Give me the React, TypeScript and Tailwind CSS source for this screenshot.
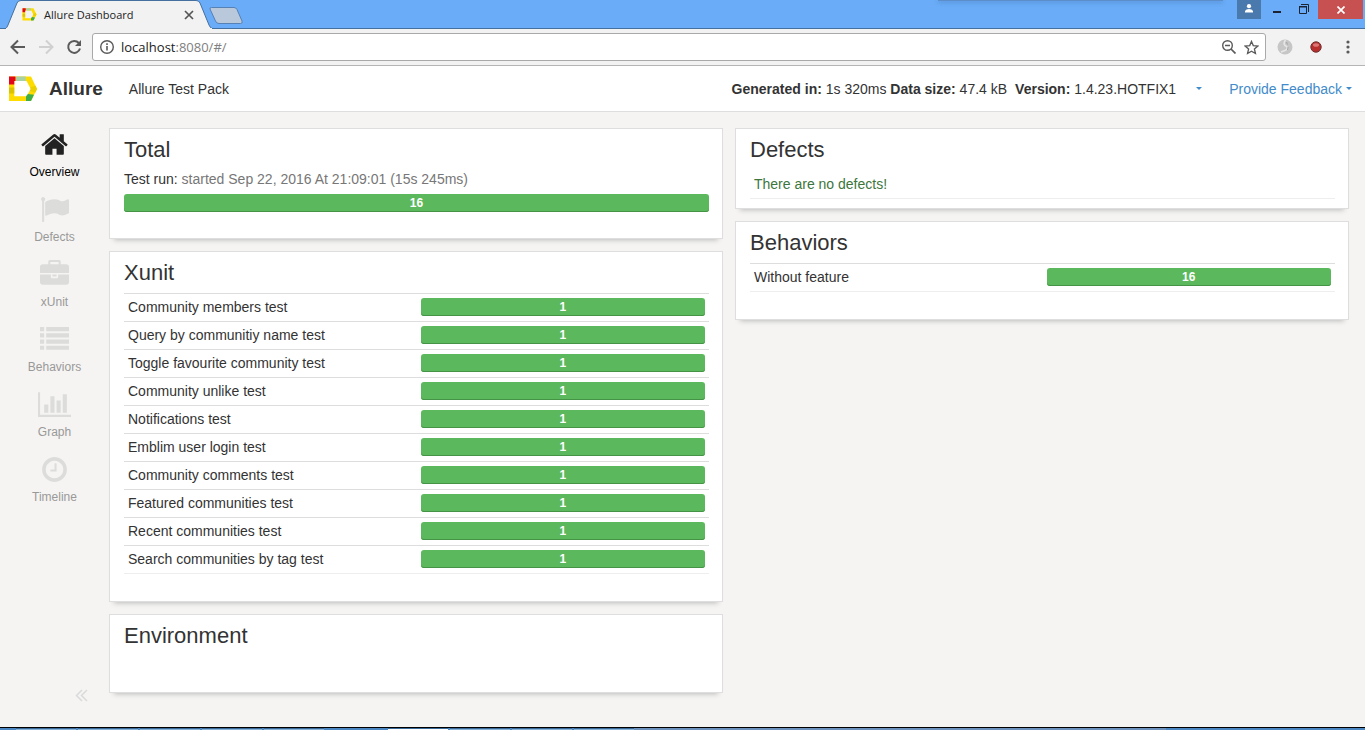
import React from "react";

const suites = [
  "Community members test",
  "Query by communitiy name test",
  "Toggle favourite community test",
  "Community unlike test",
  "Notifications test",
  "Emblim user login test",
  "Community comments test",
  "Featured communities test",
  "Recent communities test",
  "Search communities by tag test",
];

const icons = {
  home: "M1472 992v480q0 26-19 45t-45 19h-384v-384h-256v384h-384q-26 0-45-19t-19-45v-480q0-1 .5-3t.5-3l575-474 575 474q1 2 1 6zm223-69l-62 74q-8 9-21 11h-3q-13 0-21-7l-692-577-692 577q-12 8-24 7-13-2-21-11l-62-74q-8-10-7-23.5t11-21.5l719-599q32-26 76-26t76 26l244 204v-195q0-14 9-23t23-9h192q14 0 23 9t9 23v408l219 182q10 8 11 21.5t-7 23.5z",
  flag: "M320 256q0 72-64 110v1266q0 13-9.5 22.5t-22.5 9.5h-64q-13 0-22.5-9.5t-9.5-22.5v-1266q-64-38-64-110 0-53 37.5-90.5t90.5-37.5 90.5 37.5 37.5 90.5zm1472 64v763q0 25-12.5 38.5t-39.5 27.5q-215 116-369 116-61 0-123.5-22t-108.5-48-115.5-48-142.5-22q-192 0-464 146-17 9-33 9-26 0-45-19t-19-45v-742q0-32 31-55 21-14 79-43 236-120 421-120 107 0 200 29t219 88q38 19 88 19 54 0 117.5-21t110-47 88-47 54.5-21q26 0 45 19t19 45z",
  briefcase: "M640 256h512v-128h-512v128zm1152 640v480q0 66-47 113t-113 47h-1472q-66 0-113-47t-47-113v-480h672v160q0 26 19 45t45 19h320q26 0 45-19t19-45v-160h672zm-768 0v128h-256v-128h256zm768-480v384h-1792v-384q0-66 47-113t113-47h352v-160q0-40 28-68t68-28h576q40 0 68 28t28 68v160h352q66 0 113 47t47 113z",
  list: "M0 128h256v256h-256zM384 128h1408v256h-1408zM0 512h256v256h-256zM384 512h1408v256h-1408zM0 896h256v256h-256zM384 896h1408v256h-1408zM0 1280h256v256h-256zM384 1280h1408v256h-1408z",
  chart: "M640 896v512h-256v-512h256zm384-512v1024h-256v-1024h256zm1024 1152v128h-2048v-1536h128v1408h1920zm-640-896v768h-256v-768h256zm384-384v1152h-256v-1152h256z",
  clock: "M896 544v448q0 14-9 23t-23 9h-320q-14 0-23-9t-9-23v-64q0-14 9-23t23-9h224v-352q0-14 9-23t23-9h64q14 0 23 9t9 23zm416 352q0-148-73-273t-198-198-273-73-273 73-198 198-73 273 73 273 198 198 273 73 273-73 198-198 73-273zm224 0q0 209-103 385.5t-279.5 279.5-385.5 103-385.5-103-279.5-279.5-103-385.5 103-385.5 279.5-279.5 385.5-103 385.5 103 279.5 279.5 103 385.5z",
};

const nav = [
  { label: "Overview", d: icons.home, box: "0 0 1792 1792", active: true },
  { label: "Defects", d: icons.flag, box: "0 0 1792 1792" },
  { label: "xUnit", d: icons.briefcase, box: "0 0 1792 1792" },
  { label: "Behaviors", d: icons.list, box: "0 0 1792 1792" },
  { label: "Graph", d: icons.chart, box: "0 0 2048 1792" },
  { label: "Timeline", d: icons.clock, box: "0 0 1536 1792" },
];

function Logo({ className }: { className: string }) {
  return (
    <svg viewBox="0 0 28 26" className={className} aria-hidden="true">
      <path d="M0 .5H22L28 13 22 25H0zM5.300 5V20.300H17.500L21.800 13 17.500 5z" fill="#ffdc00" fillRule="evenodd" />
      <path d="M0 11.500h5.300v6H0z" fill="#dcc300" />
      <path d="M21 11.500L26.500 9.800 28 13l-1.700 3.500L20.500 15l1.300-2z" fill="#ead000" />
      <path d="M0 .5h6.500V5H5.300v3.500H0z" fill="#e2061a" />
      <path d="M7 .5h9.700V5H7z" fill="#a9d2a4" />
      <path d="M19 18l6 .8L22 25h-5v-4.700z" fill="#3fae49" />
    </svg>
  );
}

function BrowserChrome() {
  return (
    <header className="font-['Open_Sans',sans-serif]">
      <div className="relative flex h-[29px] border-b border-[#44709f] bg-[#6aacf7]">
        <div className="absolute top-0 right-[142px] h-px w-[285px] bg-[#5c8fca] shadow-[0_1px_4px_#3b6ba8]" />
        <div className="relative flex h-[29px] w-[213px] items-center pl-[22px]">
          <svg viewBox="0 0 213 29" className="absolute inset-0 h-full w-full" aria-hidden="true">
            <path d="M5 29Q7 28 8 25L17 3Q18 .5 21 .5H196Q199 .5 200 3L209 25Q210 28 213 29Z" fill="#f2f2f2" stroke="#44709f" />
            <path d="M6 28.500H212" stroke="#f2f2f2" />
          </svg>
          <Logo className="relative h-[13px] w-[15px]" />
          <span className="relative ml-[7px] text-[11px] leading-4 text-[#222]">Allure Dashboard</span>
          <button aria-label="Close tab" className="absolute top-[10px] left-[184px] text-[#555]">
            <svg viewBox="0 0 10 10" className="size-[10px]"><path d="M1 1l8 8M9 1L1 9" stroke="currentColor" strokeWidth="1.700" /></svg>
          </button>
        </div>
        <button aria-label="New tab" className="-ml-1 h-[26px]">
          <svg viewBox="0 0 34 26" className="h-[26px] w-[34px]"><path d="M2.500 7.500H25Q27 7.500 28 9.500L33 21Q34 23.500 31.500 23.500H10Q7.500 23.500 6.500 21L1 9Q.5 7.500 2.500 7.500Z" fill="#b9c8da" stroke="#5581b5" /></svg>
        </button>
        <div className="mr-[2px] ml-auto flex h-[19px]">
          <button aria-label="Profile" className="flex w-6 justify-center bg-[#4a79ae] pt-1 text-white">
            <svg viewBox="0 0 8 9" className="h-[9px] w-2"><circle cx="4" cy="2.200" r="2.100" fill="currentColor" /><path d="M0 8.500V7q1-2 4-2t4 2v1.500z" fill="currentColor" /></svg>
          </button>
          <button aria-label="Minimize" className="flex w-8 items-end justify-center pb-[6px]"><span className="h-[2px] w-2 bg-[#1b2430]" /></button>
          <button aria-label="Restore" className="flex w-[25px] justify-center pt-1 pr-1">
            <svg viewBox="0 0 10 10" className="size-[10px]"><path d="M.5 3h7v6.500h-7zM0 2.500h8M2 .5h7.500V8" fill="none" stroke="#1b2430" /></svg>
          </button>
          <button aria-label="Close" className="flex w-[45px] items-center justify-center bg-[#c75050]">
            <svg viewBox="0 0 8 8" className="size-2"><path d="M.5.5l7 7M7.500.5l-7 7" stroke="#fff" strokeWidth="1.700" /></svg>
          </button>
        </div>
      </div>
      <div className="flex h-[37px] items-center border-b border-[#b6b4b6] bg-[#f2f2f2] pr-[13px] pl-[10px] text-[#5a5a5a]">
        <button aria-label="Back"><svg viewBox="0 0 16 16" className="size-4"><path d="M15 8H2M8 1.500L1.500 8 8 14.500" fill="none" stroke="currentColor" strokeWidth="2" /></svg></button>
        <button aria-label="Forward" className="ml-3 text-[#d0d0d0]"><svg viewBox="0 0 16 16" className="size-4"><path d="M1 8h13M8 1.500L14.500 8 8 14.500" fill="none" stroke="currentColor" strokeWidth="2" /></svg></button>
        <button aria-label="Reload" className="ml-3"><svg viewBox="0 0 16 16" className="size-4"><path d="M12.800 4A6 6 0 1 0 14 9.500" fill="none" stroke="currentColor" strokeWidth="2" /><path d="M15 1v6H9z" fill="currentColor" /></svg></button>
        <div className="ml-[10px] flex h-7 grow items-center rounded-[3px] border border-[#a9a9a9] bg-white px-[6px]">
          <svg viewBox="0 0 16 16" className="size-4"><circle cx="8" cy="8" r="6.300" fill="none" stroke="currentColor" strokeWidth="1.400" /><path d="M8 7v4.500M8 4.200v1.700" stroke="currentColor" strokeWidth="1.600" /></svg>
          <div className="relative ml-[6px] grow text-[13px] leading-5">
            <input aria-label="Address" defaultValue="localhost:8080/#/" className="absolute inset-0 w-full bg-transparent text-transparent outline-none" />
            <span className="pointer-events-none" aria-hidden="true"><span className="text-[#222]">localhost</span><span className="text-[#808080]">:8080/#/</span></span>
          </div>
          <svg viewBox="0 0 14 14" className="size-[14px]"><circle cx="5.500" cy="5.500" r="4.800" fill="none" stroke="currentColor" strokeWidth="1.400" /><path d="M3 5.500h5M9 9l4.500 4.500" stroke="currentColor" strokeWidth="1.700" /></svg>
          <button aria-label="Bookmark" className="ml-2"><svg viewBox="0 0 16 16" className="size-[15px]"><path d="M8 1.500l1.900 4.500 4.900.4-3.700 3.200 1.100 4.800L8 11.900l-4.200 2.500 1.100-4.800L1.200 6.400 6.100 6z" fill="none" stroke="currentColor" strokeWidth="1.400" /></svg></button>
        </div>
        <svg viewBox="0 0 16 16" className="ml-[11px] size-4"><circle cx="8" cy="8" r="7.500" fill="#c6c6c6" /><path d="M8.500 1Q6 4 8 6.500q4 2 1 4.500l-5 2" fill="none" stroke="#e6e6e6" strokeWidth="1.600" /><path d="M9.500 3l1 2.500M11 8l-.5 3" stroke="#999" strokeWidth=".8" /></svg>
        <svg viewBox="0 0 12 12" className="ml-[17px] size-3"><circle cx="6" cy="6" r="5.200" fill="#b82e2e" stroke="#6e3030" /><ellipse cx="6" cy="4" rx="3" ry="1.800" fill="#dc7777" /></svg>
        <button aria-label="Menu" className="ml-[22px]"><svg viewBox="0 0 8 14" className="h-[14px] w-2"><circle cx="4" cy="2" r="1.600" fill="currentColor" /><circle cx="4" cy="7" r="1.600" fill="currentColor" /><circle cx="4" cy="12" r="1.600" fill="currentColor" /></svg></button>
      </div>
    </header>
  );
}

function Caret() {
  return <svg viewBox="0 0 6 3" className="h-[3px] w-[6px]" aria-hidden="true"><path d="M0 0h6L3 3z" fill="#428bca" /></svg>;
}

function Bar({ value }: { value: number }) {
  return (
    <div className="h-[18px] rounded-[3px] bg-[#5cb85c] text-center text-xs leading-[18px] font-bold text-white shadow-[inset_0_-1px_0_#459345]">{value}</div>
  );
}

function Card({ title, className = "", children }: { title: string; className?: string; children?: React.ReactNode }) {
  return (
    <section className={"border border-[#dedede] bg-white pt-[9px] pr-[13px] pl-[14px] shadow-[0_6px_5px_-5px_#bbb] " + className}>
      <h2 className="text-[22px] leading-6">{title}</h2>
      {children}
    </section>
  );
}

function ResultTable({ rows }: { rows: { name: string; value: number }[] }) {
  return (
    <table className="mt-2 w-full table-fixed border-collapse border-b border-[#eee]">
      <tbody>
        {rows.map((row) => (
          <tr key={row.name} className="h-7 border-t border-[#ddd] align-top">
            <td className="px-1 pt-1 leading-[18px]">{row.name}</td>
            <td className="px-1 pt-1"><Bar value={row.value} /></td>
          </tr>
        ))}
      </tbody>
    </table>
  );
}

function Taskbar() {
  return (
    <div className="flex h-[3px] border-t border-black bg-[#4a87c3]">
      <div className="ml-4 flex w-[310px] gap-[2px]">
        {[0, 1, 2, 3, 4].map((n) => <span key={n} className="h-[2px] w-[60px] border-t border-[#3a6a9a] bg-[#86b2da]" />)}
      </div>
      <div className="ml-[62px] flex gap-[2px]">
        <span className="h-[2px] w-[60px] border-t border-[#3a6a9a] bg-white" />
        {[0, 1, 2].map((n) => <span key={n} className="h-[2px] w-[60px] border-t border-[#3a6a9a] bg-[#86b2da]" />)}
      </div>
      <span className="w-[532px] bg-[#6c92bd]" />
    </div>
  );
}

export default function App() {
  return (
    <div className="flex min-h-screen flex-col bg-[#f5f4f2] font-['Liberation_Sans',Arial,sans-serif] text-sm text-[#333]">
      <BrowserChrome />
      <div className="flex h-[46px] items-center border-b border-[#dedede] bg-white pr-[13px] pl-[9px]">
        <Logo className="h-[26px] w-7" />
        <a href="#/" className="ml-3 text-[19px] leading-6 font-bold">Allure</a>
        <span className="ml-[26px]">Allure Test Pack</span>
        <div className="ml-auto flex items-center whitespace-pre">
          <span><b>Generated in:</b> 1s 320ms </span>
          <span><b>Data size:</b> 47.4 kB</span>
          <span className="ml-2"><b>Version:</b> 1.4.23.HOTFIX1</span>
          <button aria-label="Choose version" className="ml-5"><Caret /></button>
          <a href="#/feedback" className="ml-[27px] flex items-center gap-1 text-[#428bca]">Provide Feedback<Caret /></a>
        </div>
      </div>
      <div className="flex grow">
        <nav className="flex w-[109px] shrink-0 flex-col pt-[18px]">
          {nav.map((item) => (
            <a key={item.label} href={"#/" + item.label.toLowerCase()} className={"flex h-[65px] flex-col items-center text-xs " + (item.active ? "text-black" : "text-[#999]")}>
              <svg viewBox={item.box} className={"h-[29px] w-[33px] " + (item.active ? "text-[#222]" : "text-[#dcdcdb]")} aria-hidden="true"><path d={item.d} fill="currentColor" /></svg>
              <span className="mt-[5px]">{item.label}</span>
            </a>
          ))}
          <button aria-label="Collapse menu" className="mt-auto mr-[21px] mb-[25px] self-end">
            <svg viewBox="0 0 13 13" className="size-[13px]"><path d="M7 1L1.500 6.500 7 12M12 1L6.500 6.500 12 12" fill="none" stroke="#dadada" strokeWidth="1.500" /></svg>
          </button>
        </nav>
        <main className="grid grow grid-cols-2 items-start gap-3 pt-4 pr-4 pb-[34px]">
          <div className="flex flex-col gap-3">
            <Card title="Total" className="pb-[26px]">
              <p className="mt-[7px] mb-[5px] leading-5">Test run: <span className="text-[#777]">started Sep 22, 2016 At 21:09:01 (15s 245ms)</span></p>
              <Bar value={16} />
            </Card>
            <Card title="Xunit" className="pb-[27px]">
              <ResultTable rows={suites.map((name) => ({ name, value: 1 }))} />
            </Card>
            <Card title="Environment" className="pb-11" />
          </div>
          <div className="flex flex-col gap-3">
            <Card title="Defects" className="pb-[9px]">
              <p className="mt-[11px] border-b border-[#eee] pb-[3px] pl-1 leading-[22px] text-[#3c763d]">There are no defects!</p>
            </Card>
            <Card title="Behaviors" className="pb-[27px]">
              <ResultTable rows={[{ name: "Without feature", value: 16 }]} />
            </Card>
          </div>
        </main>
      </div>
      <Taskbar />
    </div>
  );
}
